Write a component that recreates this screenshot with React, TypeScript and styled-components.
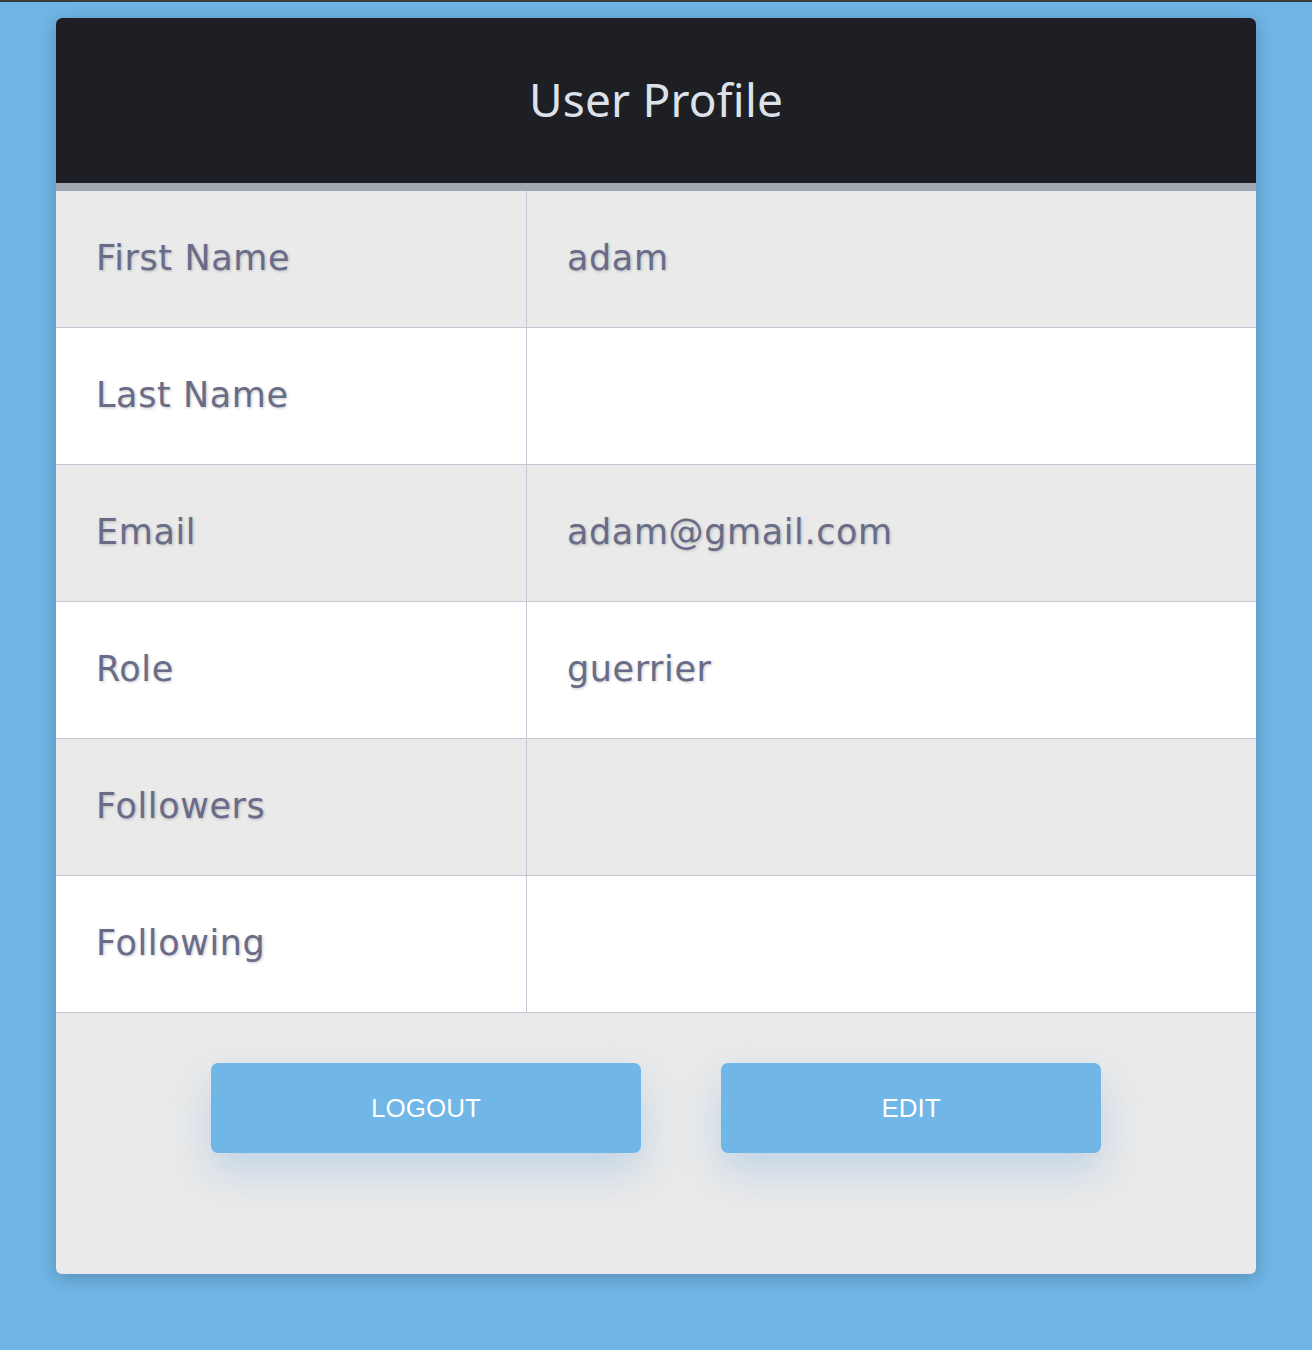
import React from 'react'
import styled, { createGlobalStyle } from 'styled-components'

interface Field {
  label: string
  value: string
}

const GlobalStyle = createGlobalStyle`
  html, body {
    margin: 0;
    padding: 0;
  }

  body {
    background: #6fb5e5;
    border-top: 2px solid #3b3c3e;
    min-height: 100vh;
    box-sizing: border-box;
    padding: 16px 0 60px;
    font-family: 'Noto Sans', 'Open Sans', sans-serif;
  }
`

const Card = styled.div`
  width: 1200px;
  margin: 0 auto;
  background: #eaeaea;
  border-radius: 6px;
  overflow: hidden;
  box-shadow: 0 4px 18px rgba(0, 0, 0, 0.22);
`

const Header = styled.header`
  height: 165px;
  background: #1e1f24;
  border-bottom: 8px solid #a0a7b0;
  display: flex;
  align-items: center;
  justify-content: center;

  h1 {
    margin: 0 0 4px;
    font-size: 46px;
    font-weight: 400;
    color: #dde2ea;
    letter-spacing: 0.2px;
  }
`

const Row = styled.div<{ $odd: boolean }>`
  display: grid;
  grid-template-columns: 471px 1fr;
  height: 137px;
  box-sizing: border-box;
  border-bottom: 1px solid #c6c7d5;
  background: ${p => (p.$odd ? '#eaeaea' : '#ffffff')};
`

const Cell = styled.div<{ $label?: boolean }>`
  display: flex;
  align-items: center;
  padding: 0 0 2px 40px;
  font-family: 'DejaVu Sans', 'Noto Sans', sans-serif;
  font-size: 35px;
  letter-spacing: 0.6px;
  color: #686c89;
  text-shadow: 1px 1px 3px rgba(0, 0, 0, 0.22);
  border-right: ${p => (p.$label ? '1px solid #c6c7d5' : 'none')};
`

const Footer = styled.div`
  display: flex;
  justify-content: center;
  align-items: flex-start;
  gap: 80px;
  height: 261px;
  padding-top: 50px;
  box-sizing: border-box;
`

const Button = styled.button<{ $width: number }>`
  width: ${p => p.$width}px;
  height: 90px;
  border: none;
  border-radius: 7px;
  background: #70b6e7;
  color: #ffffff;
  font-family: 'Liberation Sans', Arial, sans-serif;
  font-size: 26px;
  text-transform: uppercase;
  cursor: pointer;
  box-shadow: 0 18px 40px rgba(112, 170, 220, 0.35);
`

const fields: Field[] = [
  { label: 'First Name', value: 'adam' },
  { label: 'Last Name', value: '' },
  { label: 'Email', value: 'adam@gmail.com' },
  { label: 'Role', value: 'guerrier' },
  { label: 'Followers', value: '' },
  { label: 'Following', value: '' }
]

const App: React.FC = () => {
  return (
    <>
      <GlobalStyle />
      <Card>
        <Header>
          <h1>User Profile</h1>
        </Header>
        {fields.map((f, i) => (
          <Row key={f.label} $odd={i % 2 === 0}>
            <Cell $label>{f.label}</Cell>
            <Cell>{f.value}</Cell>
          </Row>
        ))}
        <Footer>
          <Button $width={430}>Logout</Button>
          <Button $width={380}>Edit</Button>
        </Footer>
      </Card>
    </>
  )
}

export default App
